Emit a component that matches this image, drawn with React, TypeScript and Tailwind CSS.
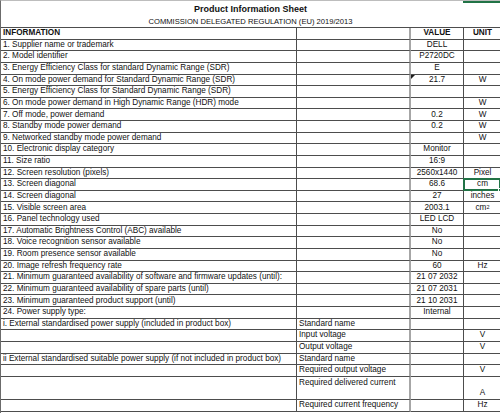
import React from "react";

type Row = {
  label?: string;
  sub?: string;
  value?: string;
  unit?: React.ReactNode;
  bold?: boolean;
  tall?: boolean;
  marker?: boolean;
  selected?: boolean;
};

const rows: Row[] = [
  { label: "INFORMATION", value: "VALUE", unit: "UNIT", bold: true },
  { label: "1. Supplier name or trademark", value: "DELL" },
  { label: "2. Model identifier", value: "P2720DC" },
  { label: "3. Energy Efficiency Class for standard Dynamic Range (SDR)", value: "E" },
  { label: "4. On mode power demand for Standard Dynamic Range (SDR)", value: "21.7", unit: "W", marker: true },
  { label: "5. Energy Efficiency Class for Standard Dynamic Range (SDR)" },
  { label: "6. On mode power demand in High Dynamic Range (HDR) mode", unit: "W" },
  { label: "7. Off mode, power demand", value: "0.2", unit: "W" },
  { label: "8. Standby mode power demand", value: "0.2", unit: "W" },
  { label: "9. Networked standby mode power demand", unit: "W" },
  { label: "10. Electronic display category", value: "Monitor" },
  { label: "11. Size ratio", value: "16:9" },
  { label: "12. Screen resolution (pixels)", value: "2560x1440", unit: "Pixel" },
  { label: "13. Screen diagonal", value: "68.6", unit: "cm", selected: true },
  { label: "14. Screen diagonal", value: "27", unit: "inches" },
  {
    label: "15. Visible screen area",
    value: "2003.1",
    unit: (
      <span>
        cm<sup className="text-[5.5px] relative -top-[1px]">2</sup>
      </span>
    ),
  },
  { label: "16. Panel technology used", value: "LED LCD" },
  { label: "17. Automatic Brightness Control (ABC) available", value: "No" },
  { label: "18. Voice recognition sensor available", value: "No" },
  { label: "19. Room presence sensor available", value: "No" },
  { label: "20. Image refresh frequency rate", value: "60", unit: "Hz" },
  { label: "21. Minimum guaranteed availability of software and firmware updates (until):", value: "21 07 2032" },
  { label: "22. Minimum guaranteed availability of spare parts (until)", value: "21 07 2031" },
  { label: "23. Minimum guaranteed product support (until)", value: "21 10 2031" },
  { label: "24. Power supply type:", value: "Internal" },
  { label: "i. External standardised power supply (included in product box)", sub: "Standard name" },
  { sub: "Input voltage", unit: "V" },
  { sub: "Output voltage", unit: "V" },
  { label: "ii External standardised suitable power supply (if not included in product box)", sub: "Standard name" },
  { sub: "Required output voltage", unit: "V" },
  { sub: "Required delivered current", unit: "A", tall: true },
  { sub: "Required current frequency", unit: "Hz" },
];

const line = "border-b border-[#4d4d4d]";

export default function App() {
  return (
    <div
      className="relative w-[500px] h-[413px] overflow-hidden bg-white text-[#111] border-l border-t border-l-[#6b6b6b] border-t-[#bdbdbd]"
      style={{ fontFamily: '"Liberation Sans", Arial, sans-serif' }}
    >
      <div className="absolute right-0 top-0 w-[37px] h-[2px] bg-[#217346]" />

      <div className={`h-[27px] flex flex-col items-center ${line}`}>
        <div className="text-[9px] font-bold leading-none mt-[4px]">Product Information Sheet</div>
        <div className="text-[7.6px] leading-none mt-[4px]">COMMISSION DELEGATED REGULATION (EU) 2019/2013</div>
      </div>

      <div className="grid grid-cols-[296px_114px_53px_37px] auto-rows-[11.63px] text-[8.2px] leading-none">
        {rows.map((r, i) => {
          const span = r.tall ? "row-span-2" : "";
          const weight = r.bold ? "font-bold" : "";
          return (
            <React.Fragment key={i}>
              <div className={`${line} ${span} ${weight} border-r border-r-[#4d4d4d] pl-[2px] flex items-center whitespace-nowrap`}>
                {r.label}
              </div>
              <div className={`${line} ${span} border-r-2 border-r-[#a6a6a6] pl-[2px] flex ${r.tall ? "items-start pt-[2px]" : "items-center"} whitespace-nowrap`}>
                {r.sub}
              </div>
              <div className={`${line} ${span} ${weight} relative border-r border-r-[#4d4d4d] flex items-center justify-center whitespace-nowrap`}>
                {r.marker && (
                  <svg className="absolute left-0 top-0" width="4" height="4" viewBox="0 0 4 4">
                    <polygon points="0,0 4,0 0,4" fill="#1f1f1f" />
                  </svg>
                )}
                {r.value}
              </div>
              <div
                className={`${line} ${span} ${weight} relative flex justify-center whitespace-nowrap ${r.tall ? "items-end pb-[2px]" : "items-center"}`}
              >
                {r.selected && (
                  <div className="absolute -left-[1px] -top-[1px] right-0 -bottom-[1px] border-2 border-[#217346]">
                    <div className="absolute -right-[3px] -bottom-[3px] w-[4px] h-[4px] bg-[#217346] border border-white" />
                  </div>
                )}
                {r.unit}
              </div>
            </React.Fragment>
          );
        })}
      </div>
    </div>
  );
}
